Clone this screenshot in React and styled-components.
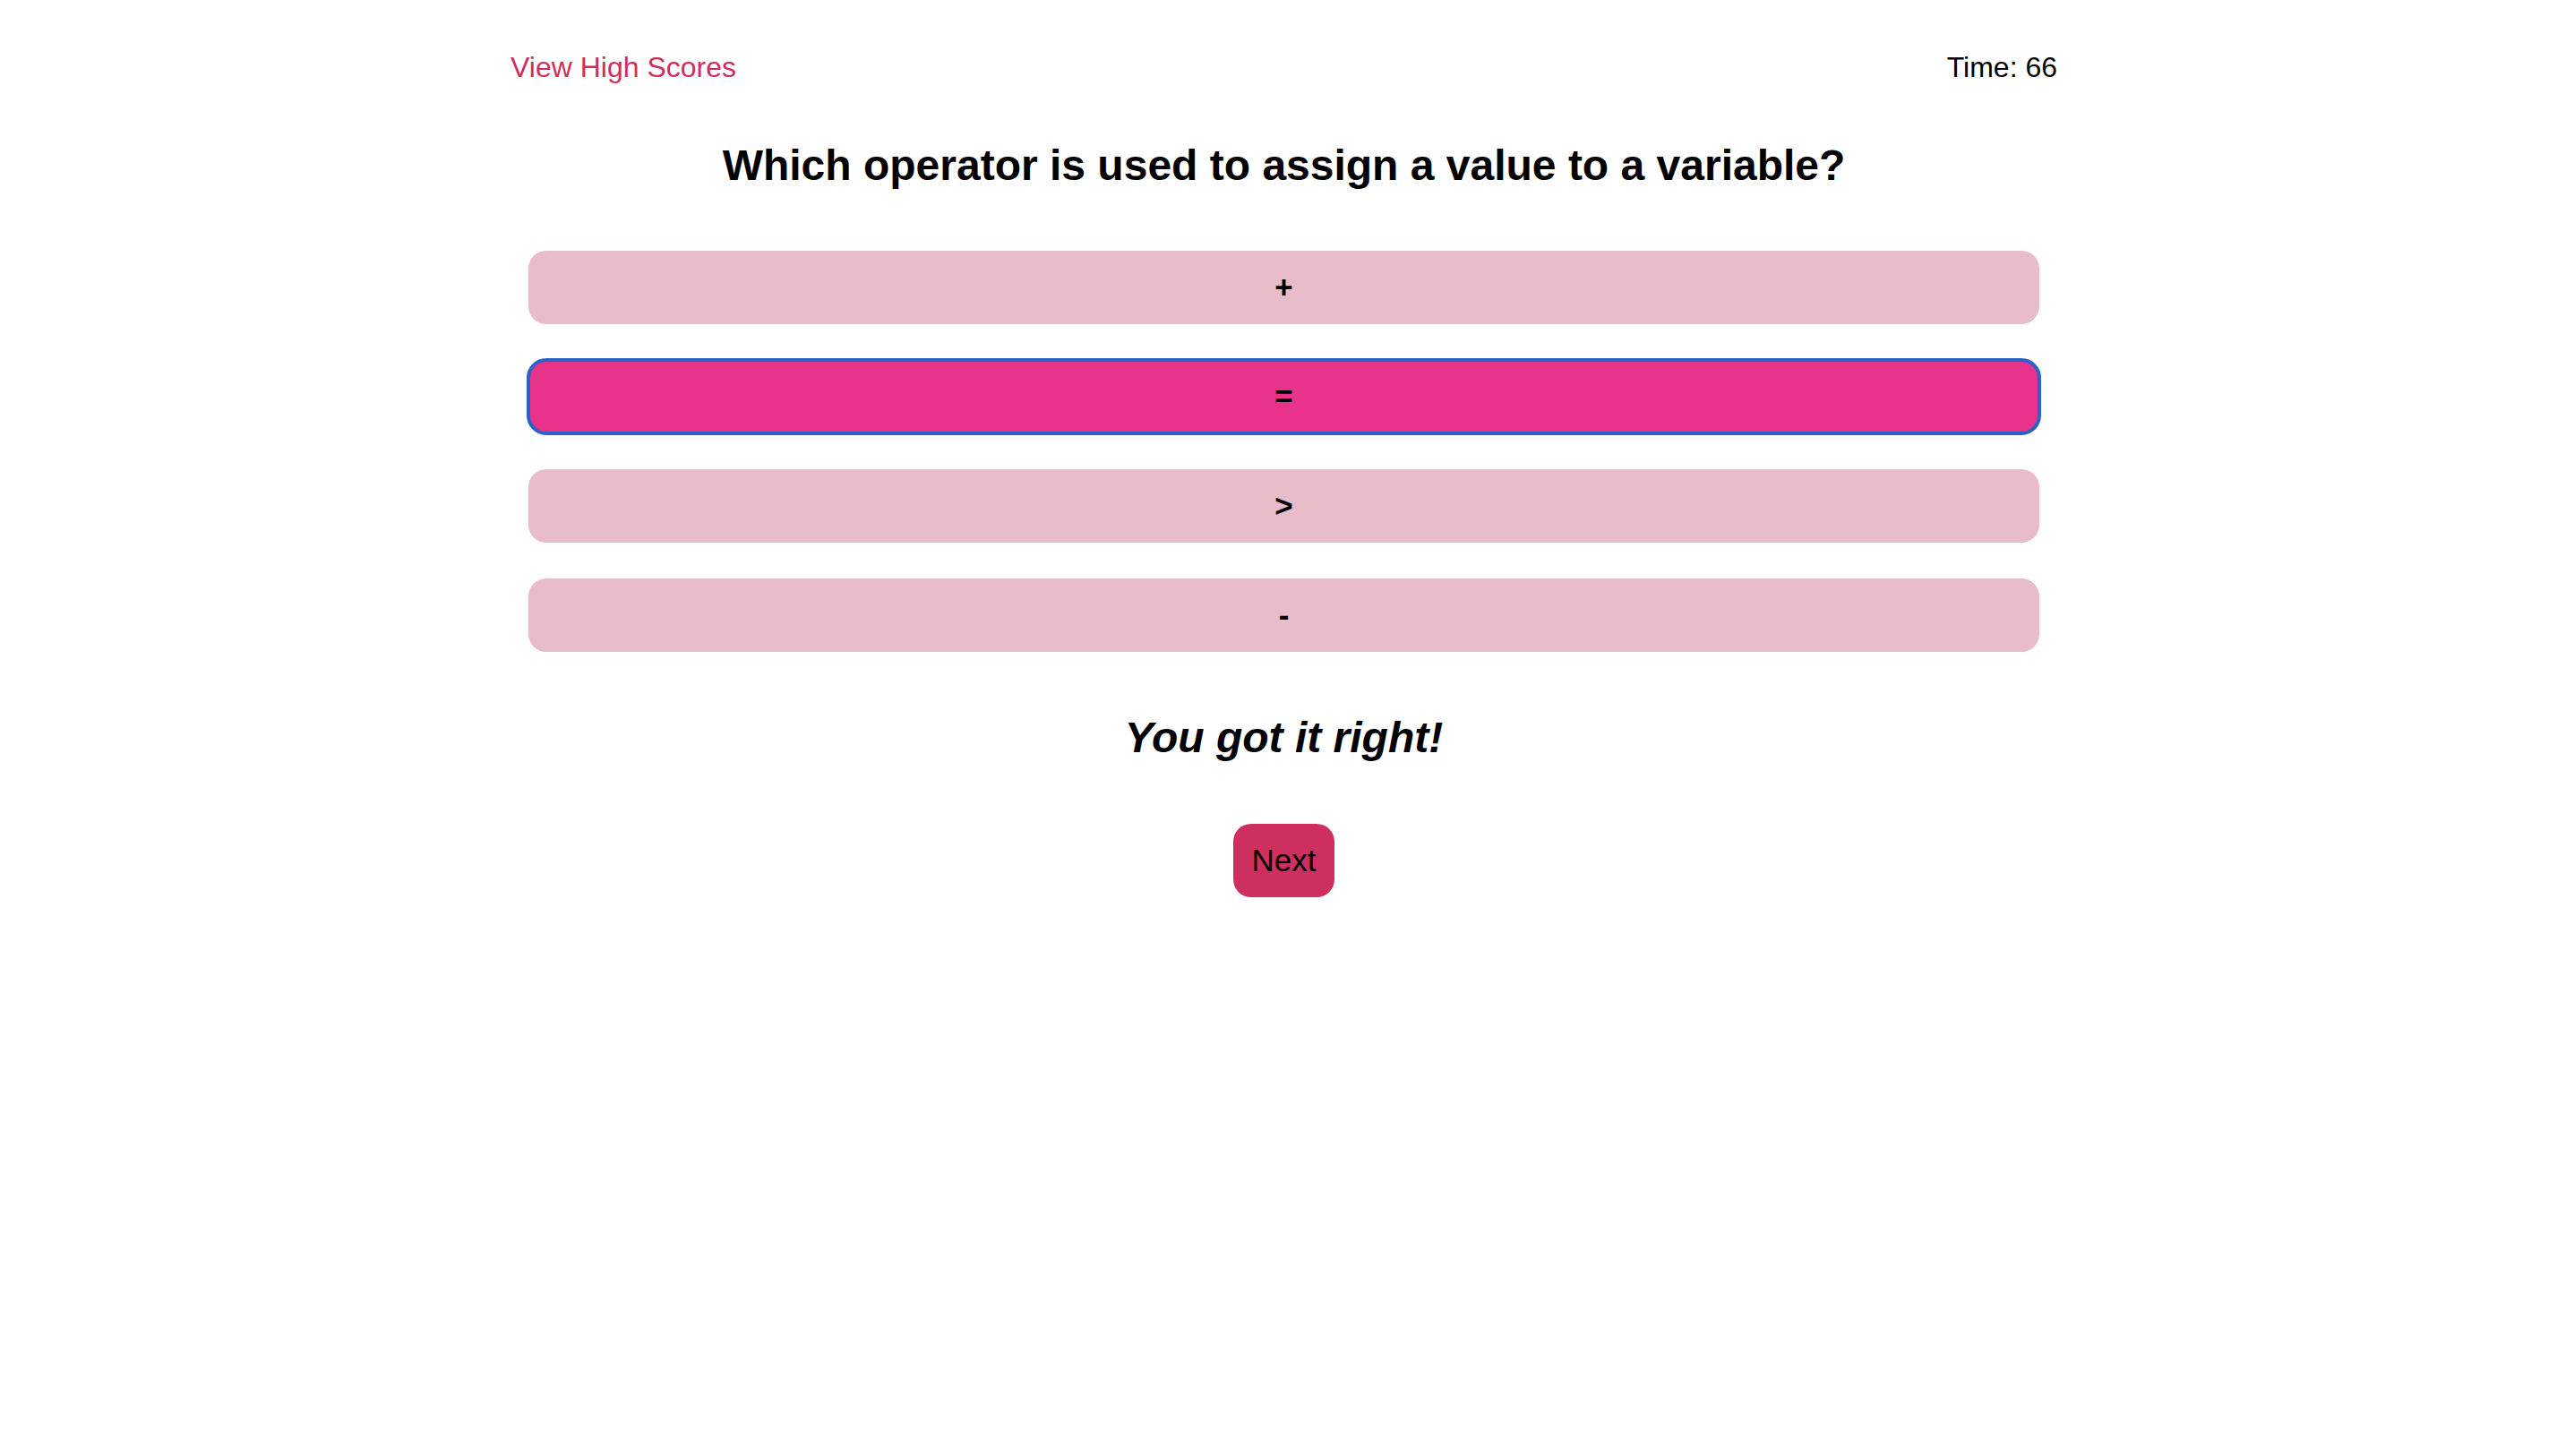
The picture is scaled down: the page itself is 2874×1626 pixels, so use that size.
import styled, { createGlobalStyle } from 'styled-components';

const GlobalStyle = createGlobalStyle`
  body {
    margin: 0;
    background: #fff;
    font-family: "Liberation Sans", Arial, sans-serif;
    color: #000;
  }
`;

const QuizPage = styled.main`
  padding: 55px 577px 0 570px;
  display: flex;
  flex-direction: column;
`;

const TopBar = styled.header`
  display: flex;
  justify-content: space-between;
  align-items: center;
  font-size: 32px;
  line-height: 40px;
`;

const ScoresLink = styled.a`
  color: #cf2f5e;
  text-decoration: none;
  cursor: pointer;
`;

const Timer = styled.span`
  color: #000;
`;

const Question = styled.h2`
  margin: 62px 0 0;
  font-size: 48px;
  line-height: 56px;
  font-weight: 700;
  text-align: center;
`;

const Choices = styled.div`
  margin: 67px 20px 0;
  display: flex;
  flex-direction: column;
  gap: 40px;
`;

const Choice = styled.button`
  height: 82px;
  border: none;
  border-radius: 20px;
  background: ${({ selected }) => (selected ? '#e9328a' : '#e8bcc8')};
  outline: ${({ selected }) => (selected ? '4px solid #2a62c9' : 'none')};
  outline-offset: -2px;
  font-family: "Liberation Sans", Arial, sans-serif;
  font-size: 35px;
  font-weight: 600;
  color: #000;
  cursor: pointer;
`;

const Feedback = styled.h3`
  margin: 68px 0 0;
  font-size: 48px;
  line-height: 56px;
  font-weight: 700;
  font-style: italic;
  text-align: center;
`;

const NextButton = styled.button`
  align-self: center;
  margin-top: 68px;
  height: 82px;
  padding: 0 21px;
  border: none;
  border-radius: 20px;
  background: #cd2f5f;
  font-family: "Liberation Sans", Arial, sans-serif;
  font-size: 35px;
  color: #000;
  cursor: pointer;
`;

const choices = ['+', '=', '>', '-'];

const App = () => {
  const picked = '=';
  return (
    <>
      <GlobalStyle />
      <QuizPage>
        <TopBar>
          <ScoresLink>View High Scores</ScoresLink>
          <Timer>Time: 66</Timer>
        </TopBar>
        <Question>Which operator is used to assign a value to a variable?</Question>
        <Choices>
          {choices.map((c) => (
            <Choice key={c} selected={c === picked}>
              {c}
            </Choice>
          ))}
        </Choices>
        <Feedback>You got it right!</Feedback>
        <NextButton>Next</NextButton>
      </QuizPage>
    </>
  );
};

export default App;
